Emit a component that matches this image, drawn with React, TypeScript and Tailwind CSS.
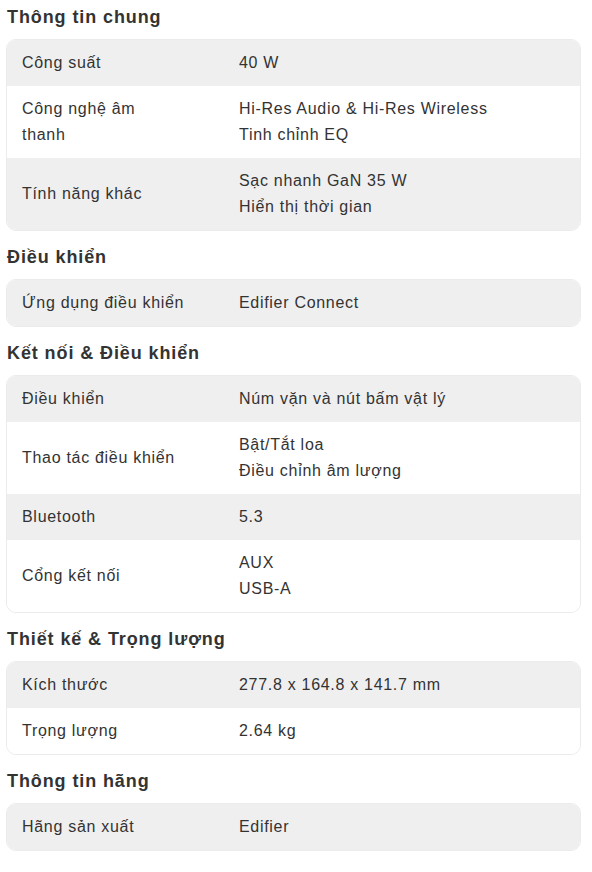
import React from "react";

type Row = { label: React.ReactNode; values: string[] };
type Section = { title: string; rows: Row[] };

const sections: Section[] = [
  {
    title: "Thông tin chung",
    rows: [
      { label: "Công suất", values: ["40 W"] },
      {
        label: (
          <>
            Công nghệ âm
            <br />
            thanh
          </>
        ),
        values: ["Hi-Res Audio & Hi-Res Wireless", "Tinh chỉnh EQ"],
      },
      { label: "Tính năng khác", values: ["Sạc nhanh GaN 35 W", "Hiển thị thời gian"] },
    ],
  },
  {
    title: "Điều khiển",
    rows: [{ label: "Ứng dụng điều khiển", values: ["Edifier Connect"] }],
  },
  {
    title: "Kết nối & Điều khiển",
    rows: [
      { label: "Điều khiển", values: ["Núm vặn và nút bấm vật lý"] },
      { label: "Thao tác điều khiển", values: ["Bật/Tắt loa", "Điều chỉnh âm lượng"] },
      { label: "Bluetooth", values: ["5.3"] },
      { label: "Cổng kết nối", values: ["AUX", "USB-A"] },
    ],
  },
  {
    title: "Thiết kế & Trọng lượng",
    rows: [
      { label: "Kích thước", values: ["277.8 x 164.8 x 141.7 mm"] },
      { label: "Trọng lượng", values: ["2.64 kg"] },
    ],
  },
  {
    title: "Thông tin hãng",
    rows: [{ label: "Hãng sản xuất", values: ["Edifier"] }],
  },
];

export default function App() {
  return (
    <div
      className="w-[592px] min-h-[872px] bg-white pl-[6px] pr-[11px] pt-[3px] text-[#333333]"
      style={{ fontFamily: '"Liberation Sans", Arial, sans-serif' }}
    >
      {sections.map((s, si) => (
        <div key={si} className={si === 0 ? "" : "mt-3"}>
          <h2 className="h-7 text-[18px] leading-7 font-bold tracking-[0.9px] text-[#333333] pl-px">
            {s.title}
          </h2>
          <div className="mt-2 rounded-[10px] border border-[#ebebeb] overflow-hidden">
            {s.rows.map((r, ri) => (
              <div
                key={ri}
                className={`flex items-center py-[10px] text-[16px] leading-[26px] tracking-[0.7px] ${
                  ri % 2 === 0 ? "bg-[#efefef]" : "bg-white"
                }`}
              >
                <div className="w-[217px] shrink-0 pl-[15px] pr-[15px]">{r.label}</div>
                <div className="pl-[15px] pr-[15px]">
                  {r.values.map((v, vi) => (
                    <div key={vi}>{v}</div>
                  ))}
                </div>
              </div>
            ))}
          </div>
        </div>
      ))}
    </div>
  );
}
